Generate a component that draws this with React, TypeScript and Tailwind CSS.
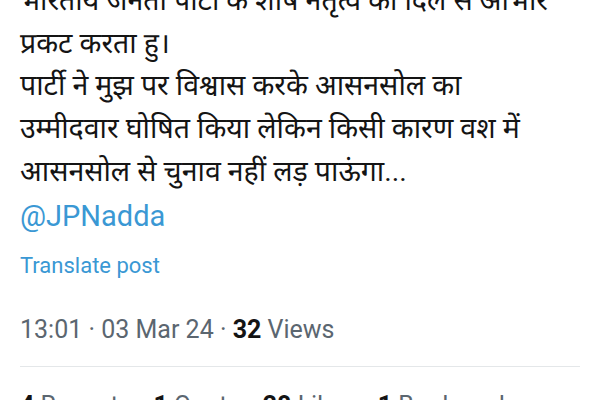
import React from 'react';

const lines = [
  'भारतीय जनता पार्टी के शीर्ष नेतृत्व का दिल से आभार',
  'प्रकट करता हु।',
  'पार्टी ने मुझ पर विश्वास करके आसनसोल का',
  'उम्मीदवार घोषित किया लेकिन किसी कारण वश में',
  'आसनसोल से चुनाव नहीं लड़ पाऊंगा...',
];

const stats = [
  ['4', 'Reposts'],
  ['1', 'Quote'],
  ['28', 'Likes'],
  ['1', 'Bookmark'],
];

export default function App() {
  return (
    <div className="w-[600px] h-[400px] overflow-hidden bg-white font-['Roboto','Noto_Sans_Devanagari','Noto_Sans',sans-serif]">
      <div className="px-[20px] -mt-[20px]">
        <div className="text-[28.5px] leading-[42.7px] text-[#141414]">
          {lines.map((line, i) => (
            <div key={i} className="whitespace-nowrap">{line}</div>
          ))}
        </div>
        <div className="text-[29px] leading-[40px] text-[#3a98d4] mt-[2px]">@JPNadda</div>
        <div className="text-[22px] leading-[28px] text-[#3a98d4] mt-[16px]">Translate post</div>
        <div className="text-[25px] leading-[34px] text-[#5b6670] mt-[33px]">
          13:01 · 03 Mar 24 · <span className="font-bold text-[#141414]">32</span> Views
        </div>
        <div className="h-px w-[560px] bg-[#e4e7e9] mt-[19px]" />
        <div className="flex gap-[22px] text-[25px] leading-[34px] text-[#5b6670] mt-[22px] whitespace-nowrap">
          {stats.map(([n, label]) => (
            <span key={label}>
              <span className="font-bold text-[#141414]">{n}</span> {label}
            </span>
          ))}
        </div>
      </div>
    </div>
  );
}
